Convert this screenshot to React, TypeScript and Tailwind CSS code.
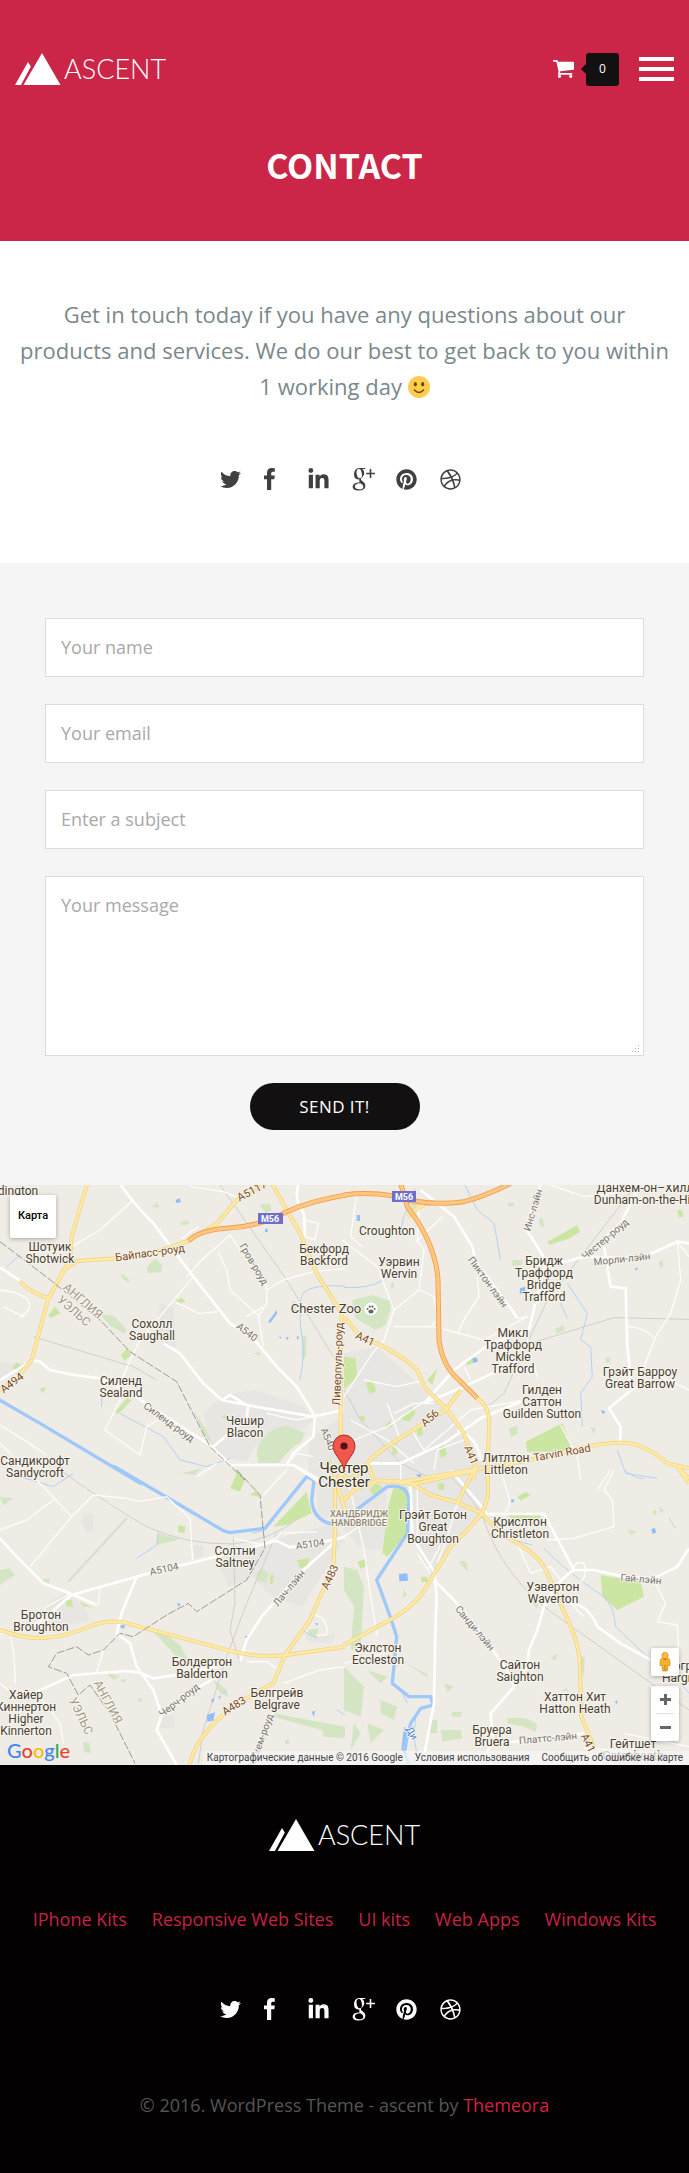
import React from "react";
import { FaTwitter, FaLinkedinIn, FaPinterest, FaDribbble } from "react-icons/fa";

function Logo() {
  return (
    <a href="#home" aria-label="Ascent" className="flex h-8 items-center gap-[3px] text-white">
      <svg viewBox="0 0 46 32" className="h-8 w-[46px]" fill="currentColor" aria-hidden="true">
        <path d="M27 0 45.500 32H8.500Z" />
        <path d="M13 9 15.800 13.500 6 32H0Z" />
      </svg>
      <span className="font-[Lato,sans-serif] text-[27px] leading-8 font-light">ASCENT</span>
    </a>
  );
}

function CartIcon() {
  return (
    <svg viewBox="0 256 1664 1408" className="h-[18px] w-[21px]" fill="currentColor" aria-hidden="true">
      <path d="M640 1536q0 52-38 90t-90 38-90-38-38-90 38-90 90-38 90 38 38 90zm896 0q0 52-38 90t-90 38-90-38-38-90 38-90 90-38 90 38 38 90zm128-1088v512q0 24-16.500 42.500t-40.500 21.500l-1044 122q13 60 13 70 0 16-24 64h920q26 0 45 19t19 45-19 45-45 19h-1024q-26 0-45-19t-19-45q0-11 8-31.500t16-36 21.500-40 15.500-29.500l-177-823h-204q-26 0-45-19t-19-45 19-45 45-19h256q16 0 28.500 6.500t19.500 15.500 13 24.500 8 26 5.500 29.500 4.500 26h1201q26 0 45 19t19 45z" />
    </svg>
  );
}

function FacebookIcon() {
  return (
    <svg viewBox="0 0 11 22" className="h-[22px] w-[11px]" fill="currentColor" aria-hidden="true">
      <path d="M10.800.2V3.700H8.700Q7.200 3.700 7.200 5.200V7.500H10.800L10.300 11.200H7.200V22H3V11.200H0V7.500H3V4.800Q3 0 7.800 0Q9.800 0 10.800.2Z" />
    </svg>
  );
}

function GooglePlusIcon() {
  return (
    <svg viewBox="0 0 24 24" className="h-6 w-6" fill="none" stroke="currentColor" aria-hidden="true">
      <path
        fill="currentColor"
        stroke="none"
        fillRule="evenodd"
        d="M7.500 1H14L12.300 2.100H10.300Q12.300 3.700 12.300 6.300Q12.300 8.700 10.300 10.300Q8.900 11.400 8.900 12.200Q8.900 13 10.600 14.200Q13.400 16 13.400 18.500Q13.400 23.500 6.400 23.500Q.6 23.500.6 19.800Q.6 15.600 7.800 15.200Q6.800 14 7.400 12.500Q2 12.600 2 7.200Q2 1.600 7.500 1ZM7 1.900Q4.200 2 4.500 5.800Q5 11.300 8 11.300Q10.300 11.200 9.900 7.300Q9.300 1.900 7 1.900ZM8.300 16.300Q2.900 16.600 2.900 19.300Q3 22.300 7.300 22.300Q11.400 22.200 11.300 19.400Q11.200 17.800 8.300 16.300Z"
      />
      <path d="M18.500 2V11M14.200 6.500H23" strokeWidth="1.600" />
    </svg>
  );
}

const socials = [
  { name: "Twitter", icon: <FaTwitter className="h-[21px] w-[21px]" /> },
  { name: "Facebook", icon: <FacebookIcon /> },
  { name: "LinkedIn", icon: <FaLinkedinIn className="h-[23px] w-[21px]" /> },
  { name: "Google Plus", icon: <GooglePlusIcon /> },
  { name: "Pinterest", icon: <FaPinterest className="h-[21px] w-[21px]" /> },
  { name: "Dribbble", icon: <FaDribbble className="h-[21px] w-[21px]" /> },
];

function Socials({ tone }: { tone: string }) {
  return (
    <ul className={"flex justify-center pl-3.5 " + tone}>
      {socials.map((s) => (
        <li key={s.name} className="w-11">
          <a href={"#" + s.name.toLowerCase().replace(" ", "-")} aria-label={s.name} className="flex h-6 items-center">
            {s.icon}
          </a>
        </li>
      ))}
    </ul>
  );
}

/* Map tiles: each quarter carries its own shapes, three units to a pixel. */
type Tile = {
  at: string;
  urban: string;
  pale: string;
  parks: string;
  rail: string;
  stream: string;
  river: string;
  ponds: string;
  lanes: string;
  streets: string;
  yellow: string;
  orange: string;
  border: string;
};

const tiles: Tile[] = [
  {
    at: "translate(0 -15)",
    urban:
      "M610 700l60-55 100-15 140 50 30 40-30 30-60-5-90 60-20 40-60-10-50-40zM480 370l40 10 10 120-40 0-20-60zM925 780l110-80v200h-110zM0 545l80 5-10 20-70 30z",
    pale: "M440 262l25-25 22 18-4 22-40 2zM300 402l40 5 40 40-5 15-45-25zM365 280l25 20-5 8-22-18zM780 75l30-5 5 20-20 8zM905 470l15-5-2 65-12 10zM880 360l10 10-5 30-15-10zM455 80l18-15 4 18zM540 130l20-10 10 12-22 4zM760 520l22-5-4 12zM770 815q20-70 90-78l55 22-10 25-30 20-40 45-60 0zM580 690l40 60 20 50-30-40z",
    parks: "M520 365l25-12 12 12-20 6zM145 405l20-25 16 20-30 14zM362 525l20-20 12 20-20 18zM345 695l35-40 15 5-40 42zM120 625l18-3-10 18zM35 565l15-18 15 10-15 12zM665 710l12-8 4 18z",
    rail: "M660 15L860 300 1000 530M100 470L400 560 470 600",
    stream: "M1035 318q-100-5-125 20q-20 40 0 160q0 60-10 100M20 260l40-35M360 700l130 70 50 70 80 20 70-25M305 640v40",
    river: "M-10 655L120 730 425 912",
    ponds: "M527 60l12-5 4 12-14 2zM805 425l25-35 2 10-22 30zM795 146l8 0 0 10-8 0zM838 468l6 4-4 6zM858 470l8 2-4 10zM890 468l8 4-6 8z",
    lanes:
      "M580 290L480 410 420 480 390 540 365 600 380 620 315 750 420 825 440 740 490 710M690 165L605 240 560 290M690 165L735 230 800 320 800 370 775 410 790 500M800 330L850 300 940 275 1035 265M525 365l70 35 60-5M400 60L300 150 215 200M0 790l50 50M0 330q90 10 90 50l-20 30-60-30M780 410L690 330 680 270 655 215M545 175l50-35M570 20l100 15 50 20M740 410l50-30M0 735l80 50 60 40M915 120l40 10-10 50-30-10M70 400l-10 15M650 850l-60 40M860 850l30-30 50 10M800 700l90 20 50-10",
    streets:
      "M0 262L60 302M360 10Q390 60 460 130L580 290 690 430 760 475 830 560 890 620 945 710 940 770 880 820 860 855M95 540l25 5 30 25q60 15 150 25L400 645 490 705 630 795 690 855 880 855 960 900M490 490L540 520 610 610 665 660 740 675 940 710 1030 690M640 800L740 715 745 675M895 15Q880 60 912 100L915 170M100 540L0 600M665 660l25-15 50 30",
    yellow:
      "M265 0L215 170 210 240 145 355 95 540 50 595 0 630M150 350L190 270 230 243 350 235 470 215 565 183 650 130 720 50 800 10M60 305q40 40 90 50M815 10L900 160 950 280 1025 400 1022 540 1022 900",
    orange: "M565 183Q600 150 680 145Q780 140 860 95Q940 60 1040 45",
    border: "M0 185L145 295 300 420 390 515 530 605 630 800 735 900",
  },
  {
    at: "translate(1032 -15)",
    urban: "M0 520L100 500 230 620 310 700 420 860 420 900 0 900z",
    pale: "M25 360l60-15 60 20-20 70-30 15-60-35zM505 240l30 0 0 15-30 3zM635 445l25-8 2 15-25 8zM785 535l10-5 5 15-15 3zM945 245l12-3 0 20-10 0zM495 745l25-8 0 25-18 8zM140 310l10-4 0 15-8 3zM585 120l10-8 6 30-14-6zM490 70l18-3 4 10-18 4zM0 365l12 8-4 16zM740 740l14 5-4 20zM200 70l20-4-5 30-12-5z",
    parks:
      "M610 185l90-50 8 20-30 20-60 20zM545 785l110-55 15 35 20 45-70 5-70 0zM0 530l35 5 5 60-40 30zM65 610l20-12 12 35-20 8zM165 715l40-35 10 20-20 25zM250 600l30-35-15 50 10 10zM285 800l15-5 10 30-20 10zM45 710l15-5 5 15-15 5zM360 550l25-25 20 15-30 15zM120 740l20-20 4 22zM215 745l18-6 4 25-15 5zM145 795l12-4 3 30-14 4zM1000 90l14 0 4 20-14 2z",
    rail: "M880 10L610 360 480 640 420 690M560 490L810 413 1035 418M0 630L50 720 170 850 250 890",
    stream:
      "M360 10L400 90 450 130 470 240M670 310L730 400 710 480 740 500 745 590 710 640 715 740M820 810L845 880 940 895M215 25L180 110 165 170M0 322q70 5 115-20M650 370l20 45",
    river: "",
    ponds: "M528 325l15-5 2 20-18 2zM385 535l12-2 5 12-14 4zM38 105l10 0 0 18-10 0zM770 690l14 4-6 10zM872 265l10-2-4 10z",
    lanes:
      "M-5 180L100 260 150 390 120 480 85 520 0 650M150 390L225 330 240 210 220 180 225 80M150 440L270 440 420 480 550 410 520 415M225 330l45 20 10 70-20 20M400 290l5 60-40 60-25 50M1000 185L1010 300 980 400 935 470 900 560M850 440q50 0 80 35M850 640l60-40M130 670L165 770M205 755L240 810 380 690 540 660M650 735L700 830 710 900M30 780L130 740 240 665M620 15l100 35 90-10M580 590l-10-40M40 30l-20 140 35 30M1000 185l35 45M215 185l80-75M550 460l5 60-60 40M60 600l100 20 80-20M20 720l110 60 80 70M170 850l0 50M150 700l60-30 60 0M360 560l20 40M950 590l85 40M270 870l10-60 80-30",
    streets:
      "M230 30L330 110 385 200 395 245 500 385 520 415M555 450L440 490 330 570 240 670M555 450L605 240 545 145 590 15M605 260L720 230 830 130 880 30M720 230L890 235 1000 185 1035 190M780 200L800 320 845 325 850 500 860 590 850 640 795 685 830 740 828 785M520 545L360 620 250 665M70 850l100 0 130-60 110-75 120-50M340 750Q400 770 410 840",
    yellow:
      "M400 655Q440 680 435 740L430 900M0 410L50 470 120 500Q210 550 225 580L240 620 310 690 360 760 395 860 388 900M70 850Q90 820 200 755L305 690 350 630M20 900L70 850 90 900M180 905L350 875 480 855 570 838 730 800Q830 780 880 795Q940 820 970 850L1035 865M190 110q40-40 80-45M1000 860l35 50",
    orange:
      "M0 45Q70 35 150 48Q250 80 360 65Q420 50 500 10M170 10L190 80Q275 190 282 300L285 480Q295 560 350 605L400 655",
    border: "",
  },
  {
    at: "translate(0 855)",
    urban:
      "M650 270l110-40 60-20 180-50 35 50-130 200-90-30-60-60-70 30zM130 410l60-40 60 30 20 50-110 30zM250 130l30 0 0 50-20 10-15-30zM580 225l30 0 0 35-25 5zM480 740l45-5-5 40-40 0zM915 490l90 5-10 25-70-5zM945 30l90-20v140l-80-10z",
    pale: "M470 225l5-35 65 18zM770 310l15-15 20 15-5 30-30-10zM450 475l30 5 60 45 25 45-40-15zM820 730l215 40v30l-215-60zM970 770l60 5v30l-60-5zM250 815l20 5 2 30-20-5zM640 630l40 30 5 20-25-10zM925 480l30-5-5 25-25-5zM0 300l30-5 15 20-45 30zM120 330l30-5-4 15zM360 630l20-4-8 14zM410 690l16-8-4 16zM855 810l12 0 0 12-12 0zM0 80l40 5-30 20zM545 10l60-15-20 20zM320 610l40 8-20 12z",
    parks:
      "M690 55l25-55 20 30-15 35zM820 170L920 65 935 130 860 165zM535 165l22 5-5 20-18-5zM890 270l40-5-10 25-20 3zM195 390l20 0 5 20-20 0zM750 75l20-15 8 20zM810 315l10-2 0 25-10 5zM240 395l40 18-30-5z",
    rail: "M180 0Q350 120 440 170Q560 225 700 222Q820 210 900 140M830 190L740 400 680 560 610 780 595 880M700 200L705 400 690 480 720 580",
    stream: "M475 185l-5 40-60 40M795 180l-40 10M60 20l100 30 60-40M905 480l45 25M670 670l10-10M1010 720l25 15",
    river: "M340 -12L540 105 670 182 690 188 795 175 920 20 942 30 935 90q5 60 60 72l60 0",
    ponds:
      "M620 735l25-8-5 25-18 3zM632 690l12-5-5 15zM655 680l8-3-5 12zM935 725l10-3-3 20zM362 465l12 0 0 10-12 0zM530 398l12 4-6 10zM735 498l6 0-2 8zM945 460l10 0-4 8z",
    lanes:
      "M110 30L215 140 90 290M215 140L280 75 380 85 420 95 500 80 570 145 578 270M0 180L80 150 160 90M850 640L960 600 1035 590M790 75L860 0M0 490L30 492M30 495Q45 540 45 640M945 435q40 10 35 60l-30 0M310 540l-20 70M300 355l-5 50M740 575l60 0 40 25M210 372l-75 40 0 20M120 680l60 80 10 60M180 0l0 0M700 205l90 20 50-30M840 190l110-5M0 640l50 40",
    streets:
      "M90 480L215 375 410 320 640 262 830 212 870 232 1000 210M-5 200L50 260 130 340 215 372 290 405M410 320L365 430 350 490 390 520 410 590 460 660 485 735 470 780 530 885M100 670L220 615 380 603 420 608 460 625 560 610 650 590M650 620L600 650 485 735M1000 220L900 310 785 440 740 510 720 575M820 730l-40 80-10 70M880 -15l90 60M1000 210l35-10",
    yellow:
      "M0 480Q80 510 140 503Q200 500 280 465Q330 450 370 457L700 545Q780 565 860 555L1035 530M985 -30L1005 20 1005 180 1000 290 930 450 855 555 820 640 730 690Q650 740 600 810Q575 850 568 890M1005 20l30 100",
    orange: "",
    border:
      "M710 0L780 75 795 235 740 330 590 425 565 400 500 435 400 500 360 490 310 540 265 555 230 530 170 550 145 590 200 610 235 675 270 645 330 730 405 880",
  },
  {
    at: "translate(1032 855)",
    urban: "M0 0L430 0 430 130 320 220 260 320 210 200 200 50 130 40 120 240 60 240 0 180z",
    pale: "M0 290l40 10 20 50-10 180-30 10 10-130-30-50zM255 750l25 0 0 40-30 0zM290 780l60 0 5 25-60 10zM325 725l30 2-5 15-28-3zM490 745q60-10 90 20l-5 20q-40-20-85-25zM620 565l20-15-4 20zM850 180l30 5-20 10zM945 110l14 10-8 14zM180 360l10 15-15 8zM345 275q30-10 25 30l-8-10zM650 660l20-5 4 12zM710 560l12 0-2 60-8-20zM560 395l25 10-8 8zM0 590l60 60-10 90-50-20zM70 600l60 20-20 20zM110 690l50 20-10 40-40-20zM70 760l50 20-40 40zM300 640l30 10-20 15zM30 760l20 30-30 50zM185 580l60 30 10 15z",
    parks:
      "M150 45L190 50 190 190 130 260 115 250 130 120zM770 315L890 335 900 380 820 420 775 380zM520 80l25-15 15 10-30 18zM490 135l100 0 0 10-80 5zM40 275l25-8 5 20-20 10zM230 320l20 0 2 15-20 2zM280 40l20 0 0 20-15 0zM75 60l20-20 20 10-20 30zM925 125l12-5-2 15z",
    rail: "M320 20Q400 100 420 150Q470 300 600 410L880 610 1035 720",
    stream: "M510 210l55 15M600 235Q660 300 780 380Q810 410 815 470L920 570M840 0q40 30 60 25M975 145l20 30M190 700l-20-40M215 740l-5 60 10 60-20 30M1010 640l25 30",
    river: "M-10 162L0 150 50 110 130 50Q190 40 195 90L190 190 98 330Q140 440 158 500L145 640 195 680 260 680 268 705 230 715 200 760 180 840 195 885",
    ponds: "M165 312l25-2 2 22-26 2zM922 178l10-5 5 15-12 3zM500 90l10-3 0 10-8 0zM668 450l8-2 0 10-8 0zM812 695l10-4-4 12zM172 840l8-70 16 10-8 60zM215 15l16-4 0 14zM930 790l8 0 0 6z",
    lanes:
      "M470 0L498 95 485 130M690 205L810 170 805 90 780 60 810 0M520 220L560 310 620 290 650 330M625 400L680 400 720 440M930 330L965 400 940 455 1000 465 1005 560M0 580L120 550M60 240L80 380 100 500M10 20L60 240M290 225L250 300M690 300q0-30 30-20 10 40-10 55M690 205l-80 5M760 60l40-60M220 250l40 60M340 100l-30 100-30 80M0 200l60-40M220 50l0 150M720 835l160 10M840 790L1035 830",
    streets:
      "M200 50L205 200 270 305 275 350Q280 370 275 450L270 700 240 860M275 335L340 400 440 530 500 620 510 650 440 730 445 800M415 132L600 132 690 300Q640 330 600 410L580 480 555 540 550 590 510 650M690 300L750 300 840 320 930 325 1000 290 1035 235M680 400q50 0 80 70L830 520 930 575M430 825L720 790M320 0L430 130M440 825l-20 40",
    yellow:
      "M432 0L432 80 415 130 370 180 320 230 235 370Q200 420 100 470L0 525M0 90L30 60 100 32Q180 32 210 42L400 0M100 32L200 40 260 75 340 98 415 130Q450 180 520 220Q590 260 610 310L680 470Q710 540 708 600L712 740 750 830M390 0L340 98M1005 -5l30 30M-20 0l60 50",
    orange: "",
    border: "",
  },
];

type Layer = { key: keyof Tile; cls: string };

const layers: Layer[] = [
  { key: "urban", cls: "fill-[#e8e6e3]" },
  { key: "pale", cls: "fill-[#d3e5c3]" },
  { key: "parks", cls: "fill-[#cbe6a3]" },
  { key: "rail", cls: "fill-none stroke-[#d0cfcb] stroke-[3]" },
  { key: "stream", cls: "fill-none stroke-[#b3d1f7] stroke-[3]" },
  { key: "ponds", cls: "fill-[#90bffc]" },
  { key: "river", cls: "fill-none stroke-[#a0c8fb] stroke-[10]" },
  { key: "lanes", cls: "fill-none stroke-[#fdfdfc] stroke-[4]" },
  { key: "streets", cls: "fill-none stroke-white stroke-[8]" },
  { key: "yellow", cls: "fill-none stroke-[#efd27f] stroke-[12]" },
  { key: "yellow", cls: "fill-none stroke-[#ffe9a5] stroke-[8]" },
  { key: "orange", cls: "fill-none stroke-[#ef9d52] stroke-[15]" },
  { key: "orange", cls: "fill-none stroke-[#ffc77d] stroke-[10]" },
  { key: "border", cls: "fill-none stroke-[#9b9a96] stroke-[3] [stroke-dasharray:24_6]" },
];

const places: [number, number, string[]][] = [
  [50, 66, ["Шотуик", "Shotwick"]],
  [152, 143, ["Сохолл", "Saughall"]],
  [121, 200, ["Силенд", "Sealand"]],
  [245, 240, ["Чешир", "Blacon"]],
  [324, 68, ["Бекфорд", "Backford"]],
  [35, 280, ["Сандикрофт", "Sandycroft"]],
  [387, 50, ["Croughton"]],
  [399, 81, ["Уэрвин", "Wervin"]],
  [544, 80, ["Бридж", "Траффорд", "Bridge", "Trafford"]],
  [513, 152, ["Микл", "Траффорд", "Mickle", "Trafford"]],
  [542, 209, ["Гилден", "Саттон", "Guilden Sutton"]],
  [640, 191, ["Грэйт Барроу", "Great Barrow"]],
  [506, 277, ["Литлтон", "Littleton"]],
  [235, 370, ["Солтни", "Saltney"]],
  [41, 434, ["Бротон", "Broughton"]],
  [202, 481, ["Болдертон", "Balderton"]],
  [277, 512, ["Белгрейв", "Belgrave"]],
  [26, 514, ["Хайер", "Киннертон", "Higher", "Kinnerton"]],
  [433, 334, ["Грэйт Ботон", "Great", "Boughton"]],
  [520, 341, ["Крислтон", "Christleton"]],
  [553, 406, ["Уэвертон", "Waverton"]],
  [378, 467, ["Эклстон", "Eccleston"]],
  [520, 484, ["Сайтон", "Saighton"]],
  [575, 516, ["Хаттон Хит", "Hatton Heath"]],
  [492, 549, ["Бруера", "Bruera"]],
  [633, 563, ["Гейтшет", "Gatesheath"]],
  [18, 10, ["dington"]],
  [645, 7, ["Данхем-он–Хилл", "Dunham-on-the-Hill"]],
  [686, 485, ["Харгрейв", "Hargrave"]],
];

const BROWN = "fill-[#7b4a21] text-[11px]";
const GREY = "fill-[#77736c] text-[10px]";
const TAN = "fill-[#a39a84] text-[12px]";

const roadNames: [number, number, number, string, string][] = [
  [150, 68, -8, "Байпасс-роуд", BROWN],
  [254, 79, 59, "Гров-роуд", GREY],
  [252, 6, -28, "A5117", BROWN],
  [247, 147, 38, "A540", GREY],
  [12, 198, -37, "A494", BROWN],
  [169, 237, 36, "Силенд-роуд", GREY],
  [328, 254, 68, "A540", GREY],
  [338, 179, -88, "Ливерпуль-роуд", BROWN],
  [83, 116, 41, "АНГЛИЯ", TAN],
  [74, 126, 41, "УЭЛЬС", TAN],
  [533, 25, -73, "Инс-лэйн", GREY],
  [488, 97, 54, "Пиктон-лэйн", GREY],
  [605, 54, -40, "Честер-роуд", GREY],
  [622, 74, -6, "Морли-лэйн", GREY],
  [365, 154, 25, "A41", BROWN],
  [430, 233, -42, "A56", BROWN],
  [471, 270, 68, "A41", BROWN],
  [562, 268, -10, "Tarvin Road", BROWN],
  [164, 384, -12, "A5104", GREY],
  [310, 359, -8, "A5104", GREY],
  [289, 403, -50, "Лач-лэйн", GREY],
  [330, 392, -65, "A483", BROWN],
  [234, 521, -32, "A483", BROWN],
  [179, 515, -38, "Черч-роуд", GREY],
  [260, 557, -70, "Росхем-роуд", GREY],
  [108, 517, 62, "АНГЛИЯ", TAN],
  [81, 531, 64, "УЭЛЬС", TAN],
  [475, 443, 50, "Санди-лэйн", GREY],
  [641, 394, 5, "Гай-лэйн", GREY],
  [548, 553, -5, "Платтс-лэйн", GREY],
  [588, 558, 65, "A41", BROWN],
  [412, 548, 60, "Ди", "fill-[#4c86d8] text-[10px]"],
];

function MapDrawing() {
  return (
    <svg
      viewBox="0 0 689 580"
      preserveAspectRatio="xMidYMid slice"
      className="block h-[580px] w-full bg-[#efece5] font-[Roboto,sans-serif]"
      role="img"
      aria-label="Chester"
    >
      <g transform="scale(0.33333)" strokeLinejoin="round">
        <path d="M205 1190L380 1000" className="stroke-[#dddcda] stroke-[7]" />
        <path d="M950 830l160-30 20 60-60 70-90 0z" className="fill-[#f1e6d4]" />
        {layers.map((l, i) => (
          <g key={i} className={l.cls}>
            {tiles.map((t) => (
              <path key={t.at} transform={t.at} d={t[l.key] || "M0 0"} />
            ))}
          </g>
        ))}
      </g>

      <g textAnchor="middle" className="stroke-[#f7f5f0] stroke-2 [paint-order:stroke]" strokeLinejoin="round">
        {roadNames.map(([x, y, a, t, cls], i) => (
          <text key={i} className={cls} dominantBaseline="central" transform={`translate(${x} ${y}) rotate(${a})`}>
            {t}
          </text>
        ))}
        <g className="fill-[#8f8672] text-[9px] font-medium">
          <text x="359" y="332">ХАНДБРИДЖ</text>
          <text x="359" y="341">HANDBRIDGE</text>
        </g>
        <g className="fill-[#4b4130] text-[12px]">
          {places.map(([x, y, lines], i) => (
            <text key={i} x={x} y={y}>
              {lines.map((line, n) => (
                <tspan key={n} x={x} dy={n === 0 ? 0 : 12}>
                  {line}
                </tspan>
              ))}
            </text>
          ))}
        </g>
        <text x="326" y="128" className="fill-[#4b4130] text-[13px]">
          Chester Zoo
        </text>
        <g className="fill-[#3d3527] text-[15px]">
          <text x="344" y="288">Честер</text>
          <text x="344" y="302">Chester</text>
        </g>
      </g>

      <g className="fill-[#6f6fca]">
        <rect x="258" y="28" width="25" height="11" />
        <rect x="392" y="6" width="24" height="11" />
      </g>
      <g textAnchor="middle" className="fill-white text-[9px] font-bold">
        <text x="270" y="37">M56</text>
        <text x="404" y="15">M56</text>
      </g>

      <circle cx="371" cy="124" r="6.500" className="fill-white" />
      <g className="fill-[#6d675b]">
        <ellipse cx="371" cy="126.500" rx="2.600" ry="2" />
        <circle cx="367.500" cy="124" r="1" />
        <circle cx="369.700" cy="121.700" r="1.100" />
        <circle cx="372.400" cy="121.700" r="1.100" />
        <circle cx="374.600" cy="124" r="1" />
      </g>

      <path
        d="M344 286C343 275 333 270 333 261A11 11 0 0 1 355 261C355 270 345 275 344 286Z"
        className="fill-[#f1554c] stroke-[#a8302b] stroke-1"
      />
      <circle cx="344" cy="261" r="3.600" className="fill-[#4c1512]" />
    </svg>
  );
}

const fields = [
  { id: "name", type: "text", label: "Your name" },
  { id: "email", type: "email", label: "Your email" },
  { id: "subject", type: "text", label: "Enter a subject" },
];

const fieldClass =
  "block w-full rounded-none border border-[#dcdcdc] bg-white px-[15px] text-[18px] text-[#333] outline-none placeholder:text-[#a9a9a9]";

const footerLinks = ["IPhone Kits", "Responsive Web Sites", "UI kits", "Web Apps", "Windows Kits"];

export default function App() {
  return (
    <div className="bg-white font-['Open_Sans',sans-serif]">
      <header className="h-[241px] bg-[#cb2648] pt-[52px]">
        <div className="flex h-[34px] items-center justify-between px-[15px]">
          <Logo />
          <div className="flex items-center gap-5">
            <a href="#cart" aria-label="Cart" className="flex items-center text-white">
              <CartIcon />
              <span className="ml-[7px] h-0 w-0 border-y-[5px] border-r-[5px] border-y-transparent border-r-[#121011]" />
              <span className="flex h-[33px] w-[33px] items-center justify-center rounded-[3px] bg-[#121011] text-[12px]">
                0
              </span>
            </a>
            <button type="button" aria-label="Menu" className="flex w-[35px] flex-col gap-1.5">
              <span className="h-1 w-full bg-white" />
              <span className="h-1 w-full bg-white" />
              <span className="h-1 w-full bg-white" />
            </button>
          </div>
        </div>
        <h1 className="mt-[55px] text-center font-['Noto_Sans_CJK_SC',sans-serif] text-[34px] leading-[48px] font-bold text-white">
          CONTACT
        </h1>
      </header>

      <section className="px-[18px] pt-[55px] pb-[72px]">
        <p className="text-center text-[22px] leading-9 text-[#7a888b]">
          Get in touch today if you have any questions about our products and services. We do our best to get back to
          you within 1 working day{" "}
          <svg viewBox="0 0 36 36" className="inline h-[22px] w-[22px] align-[-3px]" role="img" aria-label="smile">
            <circle cx="18" cy="18" r="18" fill="#ffcc4d" />
            <ellipse cx="12" cy="13.500" rx="2.500" ry="3.500" fill="#664500" />
            <ellipse cx="24" cy="13.500" rx="2.500" ry="3.500" fill="#664500" />
            <path d="M10.500 23Q18 31 25.500 23" fill="none" stroke="#664500" strokeWidth="2.200" strokeLinecap="round" />
          </svg>
        </p>
        <div className="mt-[63px]">
          <Socials tone="text-[#404040]" />
        </div>
      </section>

      <section className="bg-[#f5f5f5] px-[45px] py-[55px]">
        <form className="flex flex-col gap-[27px]" onSubmit={(e) => e.preventDefault()}>
          {fields.map((f) => (
            <input
              key={f.id}
              id={f.id}
              type={f.type}
              aria-label={f.label}
              placeholder={f.label}
              className={fieldClass + " h-[59px] pb-0.5"}
            />
          ))}
          <div className="relative">
            <textarea
              id="message"
              aria-label="Your message"
              placeholder="Your message"
              className={fieldClass + " h-[180px] resize-none py-[15px]"}
            />
            <svg viewBox="0 0 8 8" className="absolute right-1 bottom-[3px] h-2 w-2 fill-[#b0b0b0]" aria-hidden="true">
              <path d="M6 0h1v1h-1zM6 3h1v1h-1zM6 6h1v1h-1zM3 3h1v1h-1zM3 6h1v1h-1zM0 6h1v1h-1z" />
            </svg>
          </div>
          <div className="flex justify-center pr-5">
            <button type="submit" className="h-[47px] w-[170px] rounded-full bg-[#121011] text-[17px] tracking-wide text-white">
              SEND IT!
            </button>
          </div>
        </form>
      </section>

      <section className="relative overflow-hidden font-[Roboto,sans-serif]">
        <MapDrawing />
        <button
          type="button"
          className="absolute top-2.5 left-2.5 h-[43px] w-[46px] rounded-[2px] bg-white text-[11px] font-medium text-black shadow-[0_1px_4px_rgba(0,0,0,0.3)]"
        >
          Карта
        </button>
        <div className="absolute right-2.5 bottom-6 flex flex-col gap-2.5">
          <button
            type="button"
            aria-label="Street View"
            className="flex h-7 w-7 items-center justify-center rounded-[2px] bg-white shadow-[0_1px_4px_rgba(0,0,0,0.3)]"
          >
            <svg viewBox="0 0 14 20" className="h-5 w-3.5" aria-hidden="true">
              <path
                d="M4 6.500h6q1.800 0 2 2.500v4.500h-2L9.500 19h-5L4 13.500H2V9q.2-2.500 2-2.500z"
                fill="#f6b12d"
                stroke="#c98114"
                strokeWidth=".6"
              />
              <path d="M7 13v6" stroke="#b97412" strokeWidth=".8" />
              <path d="M4.500 6.500h5L7 8.500z" fill="#d8751b" />
              <circle cx="7" cy="3.500" r="3.200" fill="#f9bb3c" stroke="#c98114" strokeWidth=".5" />
            </svg>
          </button>
          <div className="flex w-7 flex-col items-center rounded-[2px] bg-white shadow-[0_1px_4px_rgba(0,0,0,0.3)]">
            <button type="button" aria-label="Zoom in" className="flex h-[27px] w-full items-center justify-center">
              <svg viewBox="0 0 11 11" className="h-[11px] w-[11px] fill-[#666]" aria-hidden="true">
                <path d="M4 0h3v4h4v3H7v4H4V7H0V4h4z" />
              </svg>
            </button>
            <span className="h-px w-[18px] bg-[#e0e0e0]" />
            <button type="button" aria-label="Zoom out" className="flex h-[27px] w-full items-center justify-center">
              <svg viewBox="0 0 11 11" className="h-[11px] w-[11px] fill-[#666]" aria-hidden="true">
                <path d="M0 4h11v3H0z" />
              </svg>
            </button>
          </div>
        </div>
        <a
          href="#google"
          className="absolute bottom-0.5 left-[7px] font-[Lato,sans-serif] text-[20px] leading-[26px] font-medium text-[#4285f4]"
        >
          G<span className="text-[#ea4335]">o</span>
          <span className="text-[#fbbc05]">o</span>g<span className="text-[#34a853]">l</span>
          <span className="text-[#ea4335]">e</span>
        </a>
        <div className="absolute right-0 bottom-0 flex h-3.5 items-center gap-3 bg-[#f5f5f5]/75 pr-1.5 pl-1 text-[10px] leading-[14px] whitespace-nowrap text-[#444]">
          <span>Картографические данные © 2016 Google</span>
          <a href="#terms">Условия использования</a>
          <a href="#report">Сообщить об ошибке на карте</a>
        </div>
      </section>

      <footer className="flex flex-col items-center bg-[#040102] pt-[54px] pb-[55px] text-[18px] leading-7">
        <Logo />
        <nav className="mt-[54px] flex flex-wrap justify-center gap-x-[25px]">
          {footerLinks.map((l) => (
            <a key={l} href={"#" + l.toLowerCase().replaceAll(" ", "-")} className="text-[#c4233f]">
              {l}
            </a>
          ))}
        </nav>
        <div className="mt-16">
          <Socials tone="text-white" />
        </div>
        <p className="mt-[70px] text-[#555]">
          © 2016. WordPress Theme - ascent by{" "}
          <a href="#themeora" className="text-[#d0233f]">
            Themeora
          </a>
        </p>
      </footer>
    </div>
  );
}
